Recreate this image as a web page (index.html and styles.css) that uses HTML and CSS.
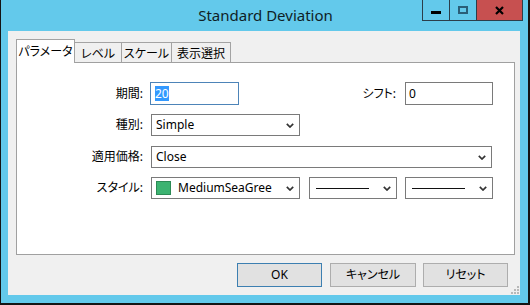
FILE: index.html
```html
<!DOCTYPE html>
<html lang="ja">
<head>
<meta charset="utf-8">
<title>Standard Deviation</title>
<link rel="stylesheet" href="styles.css">
</head>
<body>
<div class="screen">
  <div class="window">
    <div class="titlebar">
      <div class="title">Standard Deviation</div>
      <div class="controls">
        <div class="cbtn cmin"><span class="min-bar"></span></div>
        <div class="cbtn cmax"><span class="max-box"></span></div>
        <div class="cbtn cclose">
          <svg width="9" height="9" viewBox="0 0 9 9"><path d="M1 1 L8 8 M8 1 L1 8" stroke="#000" stroke-width="2.2" fill="none"/></svg>
        </div>
      </div>
    </div>
    <div class="client">
      <div class="tabs">
        <div class="tab active t1">パラメータ</div>
        <div class="tab t2">レベル</div>
        <div class="tab t3">スケール</div>
        <div class="tab t4">表示選択</div>
      </div>
      <div class="panel">
        <div class="form">
          <div class="label">期間:</div>
          <div class="row1">
            <div class="input focus"><span class="sel">20</span></div>
            <div class="shift">
              <div class="label">シフト:</div>
              <div class="input small">0</div>
            </div>
          </div>

          <div class="label">種別:</div>
          <div class="fieldrow">
            <div class="select w149"><span class="val">Simple</span>
              <svg class="chev" width="8" height="5" viewBox="0 0 8 5"><polyline points="0.8,0.8 4,4 7.2,0.8" stroke="#333" stroke-width="1.7" fill="none"/></svg>
            </div>
          </div>

          <div class="label">適用価格:</div>
          <div class="fieldrow">
            <div class="select wide"><span class="val">Close</span>
              <svg class="chev" width="8" height="5" viewBox="0 0 8 5"><polyline points="0.8,0.8 4,4 7.2,0.8" stroke="#333" stroke-width="1.7" fill="none"/></svg>
            </div>
          </div>

          <div class="label">スタイル:</div>
          <div class="fieldrow style-row">
            <div class="select w149"><span class="swatch"></span><span class="val color-val">MediumSeaGree</span>
              <svg class="chev" width="8" height="5" viewBox="0 0 8 5"><polyline points="0.8,0.8 4,4 7.2,0.8" stroke="#333" stroke-width="1.7" fill="none"/></svg>
            </div>
            <div class="select w88"><span class="line"></span>
              <svg class="chev" width="8" height="5" viewBox="0 0 8 5"><polyline points="0.8,0.8 4,4 7.2,0.8" stroke="#333" stroke-width="1.7" fill="none"/></svg>
            </div>
            <div class="select w88 last"><span class="line"></span>
              <svg class="chev" width="8" height="5" viewBox="0 0 8 5"><polyline points="0.8,0.8 4,4 7.2,0.8" stroke="#333" stroke-width="1.7" fill="none"/></svg>
            </div>
          </div>
        </div>
      </div>
      <div class="buttons">
        <div class="btn default">OK</div>
        <div class="btn b-cancel">キャンセル</div>
        <div class="btn">リセット</div>
      </div>
      <svg class="grip" width="8" height="8" viewBox="0 0 8 8">
        <rect x="6" y="0" width="2" height="2" fill="#b8b8b8"/>
        <rect x="3" y="3" width="2" height="2" fill="#b8b8b8"/>
        <rect x="6" y="3" width="2" height="2" fill="#b8b8b8"/>
        <rect x="0" y="6" width="2" height="2" fill="#b8b8b8"/>
        <rect x="3" y="6" width="2" height="2" fill="#b8b8b8"/>
        <rect x="6" y="6" width="2" height="2" fill="#b8b8b8"/>
      </svg>
    </div>
  </div>
</div>
</body>
</html>
```

FILE: styles.css
```css
* { box-sizing: border-box; }
html, body { margin: 0; padding: 0; }
body {
  font-family: "Noto Sans", "Noto Sans CJK JP", sans-serif;
  font-size: 12px;
  font-feature-settings: "palt";
  color: #000;
  background: #141414;
}
.screen {
  width: 530px;
  height: 305px;
  background: #141414;
  padding: 0 2px 2px 1px;
}
.window {
  width: 527px;
  height: 303px;
  background: #63c9eb;
  display: flex;
  flex-direction: column;
}
.titlebar {
  height: 31px;
  display: grid;
  flex: none;
}
.title {
  grid-area: 1 / 1;
  justify-self: center;
  align-self: center;
  font-size: 15px;
  color: #0f1e26;
  padding-left: 2px;
  margin-top: -1px;
}
.controls {
  grid-area: 1 / 1;
  justify-self: end;
  align-self: start;
  margin-right: 5px;
  display: flex;
  height: 21px;
  border: 1px solid #2c3e4a;
  border-top: none;
}
.cbtn {
  height: 20px;
  display: flex;
  align-items: center;
  justify-content: center;
}
.cmin { width: 27px; border-right: 1px solid #2c3e4a; }
.cmax { width: 27px; border-right: 1px solid #2c3e4a; }
.cclose { width: 45px; background: #c75050; }
.min-bar {
  width: 10px;
  height: 3px;
  background: #000;
  margin-top: 5px;
}
.max-box {
  width: 10px;
  height: 8px;
  border: 2px solid #2a5e78;
  margin-top: -1px;
}

.client {
  flex: 1;
  margin: 0 8px 8px 7px;
  background: #f0f0f0;
  padding: 8px 5px 8px 8px;
  display: flex;
  flex-direction: column;
  position: relative;
}
.tabs {
  display: flex;
  align-items: flex-end;
  height: 23px;
  position: relative;
  z-index: 2;
  flex: none;
}
.tab {
  height: 20px;
  border: 1px solid #a3a3a3;
  border-left: none;
  border-bottom: none;
  background: #f0f0f0;
  display: flex;
  align-items: center;
  justify-content: center;
  padding-top: 1px;
  color: #000;
  white-space: nowrap;
}
.tab.active {
  height: 24px;
  border-left: 1px solid #a3a3a3;
  background: #fff;
  margin-bottom: -1px;
  padding-top: 0;
  padding-bottom: 1px;
}
.t1 { width: 59px; }
.t2 { width: 47px; }
.t3 { width: 50px; }
.t4 { width: 59px; }

.panel {
  height: 193px;
  flex: none;
  background: #fff;
  border: 1px solid #a0a0a0;
  padding: 19px 21px 0 0;
}
.form {
  display: grid;
  grid-template-columns: 126px 1fr;
  grid-template-rows: 23px 22px 23px 22px;
  column-gap: 7px;
  row-gap: 9px;
}
.label {
  justify-self: end;
  align-self: center;
  white-space: nowrap;
  line-height: 16px;
}
.row1 {
  display: flex;
  align-items: stretch;
}
.shift {
  margin-left: auto;
  display: flex;
  align-items: center;
  gap: 9px;
}
.input {
  width: 89px;
  height: 23px;
  border: 1px solid #7a7a7a;
  background: #fff;
  padding: 0 0 0 4px;
  display: flex;
  align-items: center;
  line-height: 16px;
}
.input.focus { border-color: #4d84b8; }
.input.small { width: 88px; padding-left: 3px; }
.sel {
  background: #3399ff;
  color: #fff;
  line-height: 15px;
}
.fieldrow {
  display: flex;
  align-items: flex-end;
  padding-left: 1px;
}
.style-row { align-items: stretch; }
.select {
  height: 22px;
  border: 1px solid #7a7a7a;
  background: #fff;
  display: flex;
  align-items: center;
  padding: 0 0 0 4px;
  position: relative;
}
.select .val { line-height: 16px; flex: 1; }
.select .chev { margin-right: 5px; margin-left: 4px; flex: none; }
.w149 { width: 149px; }
.wide { width: 341px; }
.w88 { width: 88px; margin-left: 9px; }
.w88.last { margin-left: 8px; }
.swatch {
  width: 15px;
  height: 14px;
  background: #3cb371;
  border: 1px solid #2c8a55;
  margin-right: 7px;
  flex: none;
}
.color-val { white-space: nowrap; overflow: hidden; }
.line {
  flex: 1;
  height: 1px;
  background: #111;
  margin-left: 2px;
  margin-right: 10px;
}

.buttons {
  display: flex;
  justify-content: flex-end;
  gap: 8px;
  margin-top: 8px;
  padding-right: 7px;
  flex: none;
}
.btn {
  width: 85px;
  height: 24px;
  border: 1px solid #adadad;
  background: #e1e1e1;
  display: flex;
  align-items: center;
  justify-content: center;
  line-height: 16px;
}
.btn.default { border-color: #3c7fb1; }
.b-cancel { width: 86px; margin-right: -1px; }
.grip {
  position: absolute;
  right: 1px;
  bottom: 1px;
}
```
